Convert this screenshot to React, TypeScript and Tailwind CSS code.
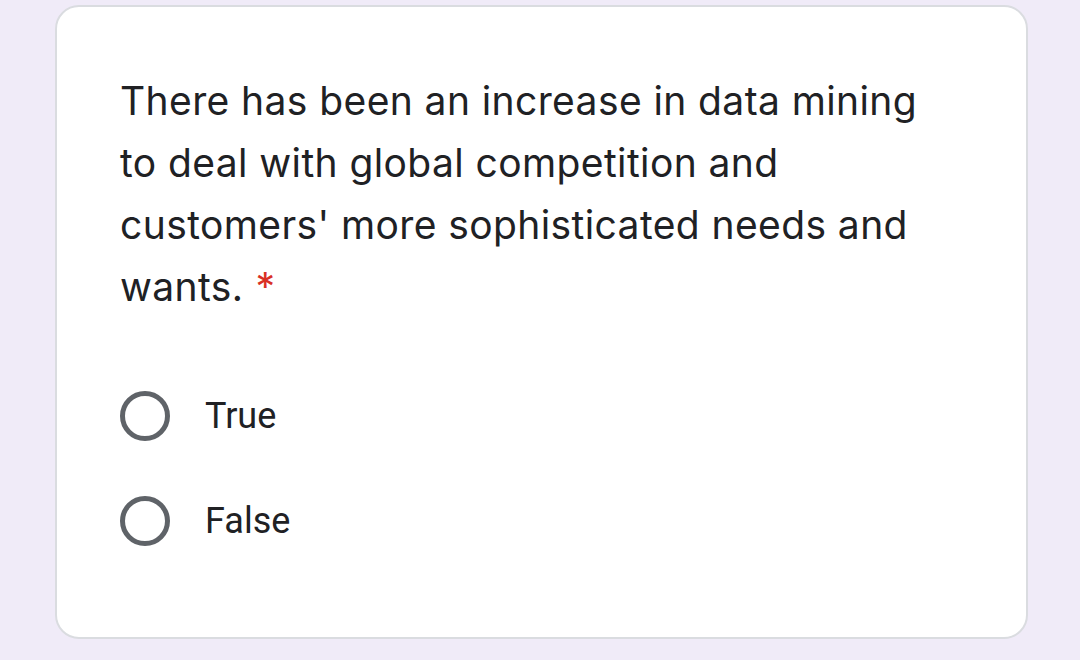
export default function App() {
  const options = ["True", "False"];

  return (
    <div className="h-[660px] w-[1080px] overflow-hidden bg-[#f0ebf8]">
      <div className="ml-[55px] mt-[5px] h-[634px] w-[973px] rounded-[24px] border-2 border-[#dadce0] bg-white px-[63px] pt-[63px]">
        {/* Question */}
        <p
          className="whitespace-nowrap text-[39px] leading-[62px] tracking-[0.4px] text-[#202124]"
          style={{ fontFamily: "Inter, sans-serif" }}
        >
          There has been an increase in data mining
          <br />
          to deal with global competition and
          <br />
          customers' more sophisticated needs and
          <br />
          wants.
          <span className="ml-[12px] text-[#d93025]">*</span>
        </p>

        {/* Options */}
        <div className="mt-[71px] flex flex-col gap-[51px]" style={{ fontFamily: "Roboto, sans-serif" }}>
          {options.map((opt) => (
            <label key={opt} className="flex items-center gap-[35px]">
              <span className="h-[50px] w-[50px] rounded-full border-[5px] border-[#5f6368]" />
              <span className="text-[36px] text-[#202124]">{opt}</span>
            </label>
          ))}
        </div>
      </div>
    </div>
  );
}
